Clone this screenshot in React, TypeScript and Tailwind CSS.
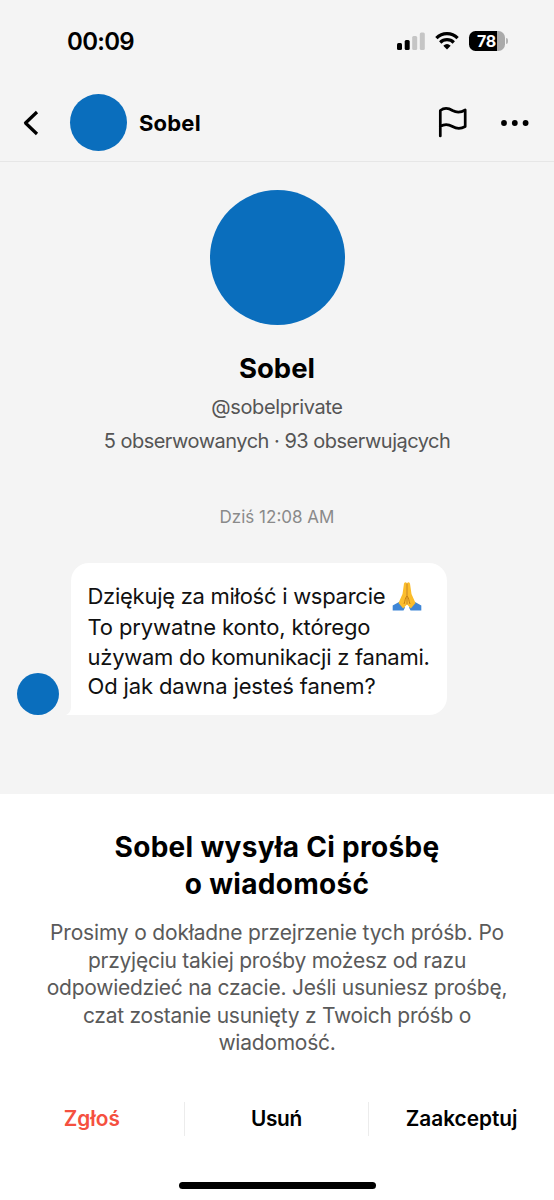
function StatusBar() {
  return (
    <div className="flex h-[82px] items-start justify-between pl-[67px] pr-[46px]">
      <span className="pt-[25px] text-[24px] leading-[34px] font-semibold tracking-[-0.7px]">00:09</span>
      <div className="flex h-[82px] items-center gap-[10px]">
        <svg width="28" height="18" viewBox="0 0 28 18">
          <rect x="0" y="11" width="5" height="7" rx="1.5" fill="#000" />
          <rect x="7.7" y="8" width="5" height="10" rx="1.5" fill="#000" />
          <rect x="15.2" y="4" width="5" height="14" rx="1.5" fill="#c5c5c5" />
          <rect x="22.8" y="0.5" width="5" height="17.5" rx="1.5" fill="#c5c5c5" />
        </svg>
        <svg width="24" height="18" viewBox="0 0 24 18">
          <path d="M1.4 6.1a15 15 0 0 1 21.2 0" fill="none" stroke="#000" strokeWidth="3.3" />
          <path d="M5.2 10.5a9.6 9.6 0 0 1 13.6 0" fill="none" stroke="#000" strokeWidth="3.2" />
          <path d="M8.3 13.7a5.6 5.6 0 0 1 7.4 0L12 17.5z" fill="#000" />
        </svg>
        <div className="flex items-center gap-[1px]">
          <div className="flex h-[20px] w-[36px] items-center justify-center overflow-hidden rounded-[6.5px] bg-linear-to-r from-black from-79% to-[#aaaaaa] to-79% pr-[1px] text-[16px] leading-[20px] font-bold tracking-[-0.3px] text-white">
            78
          </div>
          <div className="h-[6px] w-[2px] rounded-r-full bg-[#b5b5b5]" />
        </div>
      </div>
    </div>
  );
}

function Header() {
  return (
    <header className="flex h-[80px] items-center border-b-[1.5px] border-[#e6e6e6] pt-[2px] pl-[22px] pr-[25px]">
      <svg width="17" height="26" viewBox="0 0 17 26" fill="none" stroke="#000" strokeWidth="3.2">
        <path d="M15 2 L3.5 13 L15 24" strokeLinejoin="round" />
      </svg>
      <div className="ml-[31px] size-[57px] rounded-full bg-[#0a6ebd]" />
      <span className="ml-[12px] text-[22px] leading-[30px] font-bold tracking-[0.2px]">Sobel</span>
      <svg className="ml-auto" width="30" height="32" viewBox="0 0 30 32" fill="none" stroke="#000" strokeWidth="2.7" strokeLinejoin="round" strokeLinecap="round">
        <path d="M2.3 29V3.5C6 .7 10.5 1 14.5 3.5C19 6 23 5.5 27.2 3V19.5C23 22 19 22.2 14.5 19.5C10.5 17.2 6 17 2.3 19.5" />
      </svg>
      <svg className="ml-[33px]" width="28" height="6" viewBox="0 0 28 6">
        <circle cx="3" cy="3" r="2.9" />
        <circle cx="13.8" cy="3" r="2.9" />
        <circle cx="24.6" cy="3" r="2.9" />
      </svg>
    </header>
  );
}

function PrayingHands() {
  return (
    <svg className="ml-[7px] inline-block align-[-7px]" width="30" height="30" viewBox="0 0 30 30">
      <path d="M.7 24.5L7 21L13 26.5L11.5 29.5H.7z" fill="#3f86d6" />
      <path d="M29.3 24.5L23 21L17 26.5L18.5 29.5H29.3z" fill="#3f86d6" />
      <path d="M14.9 2C13.2 .6 12 1.5 11.8 4L10.5 13L6.5 22L11.2 27.5L14.9 23.5z" fill="#fbbd2c" />
      <path d="M15.1 2C16.8 .6 18 1.5 18.2 4L19.5 13L23.5 22L18.8 27.5L15.1 23.5z" fill="#fbbd2c" />
      <path d="M15 2.5V23.5M15 15C13 17 13.2 20 12 23M15 15C17 17 16.8 20 18 23" fill="none" stroke="#c77f12" strokeWidth="1" />
    </svg>
  );
}

export default function App() {
  return (
    <div className="flex h-[1200px] w-[554px] flex-col overflow-hidden bg-[#f4f4f4] font-['Inter','Liberation_Sans',sans-serif] text-black">
      <StatusBar />
      <Header />
      <main className="flex h-[632px] flex-col items-center pt-[28px]">
        <div className="size-[135px] shrink-0 rounded-full bg-[#0a6ebd]" />
        <h1 className="mt-[25px] text-[27.5px] leading-[36px] font-bold">Sobel</h1>
        <p className="mt-[8px] text-[20px] leading-[26px] tracking-[-0.35px] text-[#555]">@sobelprivate</p>
        <p className="mt-[8px] text-[20px] leading-[26px] tracking-[-0.5px] whitespace-nowrap text-[#555]">5 obserwowanych · 93 obserwujących</p>
        <p className="mt-[51px] text-[17px] leading-[24px] text-[#8a8a8a]">Dziś 12:08 AM</p>
        <div className="mt-[34px] flex items-end self-start pl-[17px]">
          <div className="size-[42px] rounded-full bg-[#0a6ebd]" />
          <svg className="ml-[7px]" width="5" height="8" viewBox="0 0 5 8">
            <path d="M5 0V8H0C3 6.5 5 4 5 0z" fill="#fff" />
          </svg>
          <div className="h-[152px] w-[376px] rounded-[18px] rounded-bl-none bg-white pt-[18px] pl-[16.5px] text-[22px] leading-[30px] whitespace-nowrap text-[#111]">
            <div className="h-[31px] tracking-[-0.27px]">Dziękuję za miłość i wsparcie<PrayingHands /></div>
            <div className="tracking-[-0.12px]">To prywatne konto, którego</div>
            <div className="tracking-[-0.26px]">używam do komunikacji z fanami.</div>
            <div className="leading-[28px] tracking-[-0.14px]">Od jak dawna jesteś fanem?</div>
          </div>
        </div>
      </main>
      <section className="flex h-[406px] flex-col items-center bg-white pt-[35px] text-center">
        <h2 className="text-[28px] leading-[37px] font-bold tracking-[0.3px]">Sobel wysyła Ci prośbę<br />o wiadomość</h2>
        <p className="mt-[16px] text-[21px] leading-[27.5px] tracking-[-0.25px] whitespace-nowrap text-[#5a5a5a]">
          <span className="tracking-[-0.17px]">Prosimy o dokładne przejrzenie tych próśb. Po</span><br />
          przyjęciu takiej prośby możesz od razu<br />
          odpowiedzieć na czacie. Jeśli usuniesz prośbę,<br />
          czat zostanie usunięty z Twoich próśb o<br />
          wiadomość.
        </p>
        <div className="mt-[45px] grid h-[34px] w-full grid-cols-3 divide-x divide-[#ececec] text-[20.8px] leading-[34px] font-semibold">
          <button className="text-[#f5503f]">Zgłoś</button>
          <button className="tracking-[-0.3px]">Usuń</button>
          <button>Zaakceptuj</button>
        </div>
        <div className="mt-[46px] h-[7px] w-[197px] rounded-full bg-black" />
      </section>
    </div>
  );
}
